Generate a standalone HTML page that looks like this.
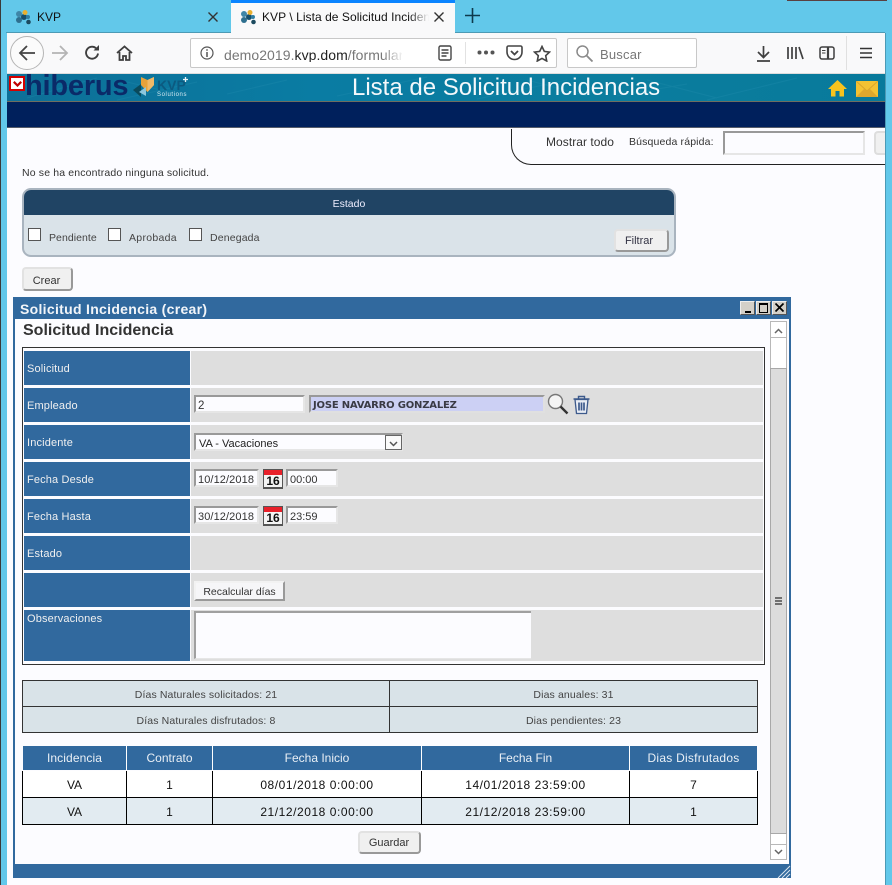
<!DOCTYPE html>
<html lang="es"><head><meta charset="utf-8"><title>KVP</title>
<style>
html,body{margin:0;padding:0;width:892px;height:885px;overflow:hidden;background:#62c8ea}
body{position:relative;font-family:"Liberation Sans",sans-serif;color:#333}
.a,.t{position:absolute;box-sizing:border-box}
.t{white-space:nowrap;line-height:1}
.lab{position:absolute;left:24px;width:166px;background:#31699e;color:#f0f0f0;font-size:11px;padding-left:3px;box-sizing:border-box;letter-spacing:.15px}
.val{position:absolute;left:191px;width:572px;background:#dedede}
.inp{position:absolute;box-sizing:border-box;background:#fcfcff;border:2px solid;border-color:#999 #e6e6e6 #e6e6e6 #999;font-size:11px;color:#333;white-space:nowrap;overflow:hidden;line-height:18px;padding-left:2px}
.btn{position:absolute;box-sizing:border-box;background:#f0f0f0;border:2px solid;border-color:#e2e2e2 #999 #999 #e2e2e2;border-radius:4px;font-size:11px;color:#333;text-align:center}
.cb{position:absolute;width:13px;height:13px;box-sizing:border-box;border:1px solid #555;background:#fff}
.c{position:absolute;text-align:center;white-space:nowrap;box-sizing:border-box}
svg{position:absolute;display:block}
.wb{position:absolute;top:301px;width:15px;height:14px;background:#d4d0c8;border:1px solid;border-color:#eee #555 #555 #eee;box-sizing:border-box}
</style></head><body>
<!-- window frame -->
<div class="a" style="left:0;top:0;width:1px;height:885px;background:#3a3a3a"></div>
<div class="a" style="left:787px;top:0;width:100px;height:1px;background:#5a4040"></div>

<!-- tabs -->
<svg style="left:15px;top:9px" width="17" height="16" viewBox="0 0 17 16"><circle cx="4" cy="5" r="3" fill="#3f86a8"/><circle cx="4" cy="11" r="3" fill="#2e6f8f"/><circle cx="9" cy="8" r="3" fill="#16506e"/><circle cx="10" cy="3.500" r="2.500" fill="#e8b030"/><circle cx="13" cy="8" r="2" fill="#2d7da3"/><circle cx="13.500" cy="13" r="2.300" fill="#1c4a5f"/></svg>
<div class="t" style="left:37px;top:11px;font-size:12px;color:#111">KVP</div>
<svg style="left:207px;top:11px" width="12" height="12"><path d="M1.500 1.500l9 9M10.500 1.500l-9 9" stroke="#333" stroke-width="1.400"/></svg>
<div class="a" style="left:6px;top:32px;width:225px;height:1px;background:#4c9ab5"></div>
<div class="a" style="left:455px;top:32px;width:430px;height:1px;background:#4c9ab5"></div>
<div class="a" style="left:231px;top:0;width:224px;height:33px;background:#f9f9fa;border-top:3px solid #0a84ff"></div>
<svg style="left:240px;top:9px" width="17" height="16" viewBox="0 0 17 16"><circle cx="4" cy="5" r="3" fill="#3f86a8"/><circle cx="4" cy="11" r="3" fill="#2e6f8f"/><circle cx="9" cy="8" r="3" fill="#16506e"/><circle cx="10" cy="3.500" r="2.500" fill="#e8b030"/><circle cx="13" cy="8" r="2" fill="#2d7da3"/><circle cx="13.500" cy="13" r="2.300" fill="#1c4a5f"/></svg>
<div class="t" style="left:262px;top:11px;font-size:12px;color:#111;width:167px;overflow:hidden;letter-spacing:.05px">KVP \ Lista de Solicitud Incidenc</div>
<div class="a" style="left:409px;top:8px;width:20px;height:18px;background:linear-gradient(90deg,rgba(249,249,250,0),#f9f9fa)"></div>
<svg style="left:433px;top:11px" width="12" height="12"><path d="M1.500 1.500l9 9M10.500 1.500l-9 9" stroke="#333" stroke-width="1.400"/></svg>
<svg style="left:465px;top:8px" width="15" height="15"><path d="M7.500 0v15M0 7.500h15" stroke="#0e3a4c" stroke-width="1.600"/></svg>

<!-- nav bar -->
<div class="a" style="left:7px;top:33px;width:878px;height:41px;background:#f9f9fa;border-bottom:1px solid #ddd"></div>
<div class="a" style="left:10px;top:36px;width:34px;height:34px;border:1px solid #b5b5b5;border-radius:50%;background:#fbfbfb"></div>
<svg style="left:18px;top:44px" width="18" height="18" fill="none" stroke="#444" stroke-width="1.800"><path d="M2 9h15M9 2L2 9l7 7"/></svg>
<svg style="left:51px;top:44px" width="18" height="18" fill="none" stroke="#b4b4b4" stroke-width="1.800"><path d="M1 9h15M9 2l7 7-7 7"/></svg>
<svg style="left:84px;top:44px" width="17" height="17" fill="none" stroke="#3f3f3f" stroke-width="1.900"><path d="M14 9.500A6 6 0 1 1 12 4.200"/><path d="M15 1v5.500H9.500" fill="#3f3f3f" stroke="none"/></svg>
<svg style="left:116px;top:45px" width="17" height="16" fill="none" stroke="#3f3f3f" stroke-width="1.800"><path d="M1 8l7.500-6.500L16 8M3.500 7v8h3.500v-4h3v4h3.500V7"/></svg>
<div class="a" style="left:190px;top:38px;width:367px;height:30px;background:#fff;border:1px solid #c8c8c8;border-radius:2px"></div>
<svg style="left:200px;top:46px" width="14" height="14" fill="none" stroke="#555" stroke-width="1.200"><circle cx="7" cy="7" r="6"/><path d="M7 6v5M7 3.200v1.500" stroke-width="1.500"/></svg>
<div class="t" style="left:224px;top:48px;font-size:14px;color:#777;width:178px;overflow:hidden;letter-spacing:.05px">demo2019.<span style="color:#222">kvp.dom</span>/formular</div>
<div class="a" style="left:382px;top:42px;width:22px;height:22px;background:linear-gradient(90deg,rgba(255,255,255,0),#fff)"></div>
<svg style="left:438px;top:45px" width="14" height="16" fill="none" stroke="#444" stroke-width="1.400"><rect x="1" y="1" width="12" height="14" rx="1.500"/><path d="M3.500 5h7M3.500 8h7M3.500 11h5"/></svg>
<div class="a" style="left:465px;top:42px;width:1px;height:22px;background:#e2e2e2"></div>
<svg style="left:477px;top:50px" width="18" height="5" fill="#555"><circle cx="2.500" cy="2.500" r="2"/><circle cx="9" cy="2.500" r="2"/><circle cx="15.500" cy="2.500" r="2"/></svg>
<svg style="left:506px;top:45px" width="17" height="16" fill="none" stroke="#444" stroke-width="1.600"><path d="M2.500 1h12A1.500 1.500 0 0 1 16 2.500V7A7.500 7.500 0 0 1 1 7V2.500A1.500 1.500 0 0 1 2.500 1z"/><path d="M5 6l3.500 3.500L12 6" stroke-width="1.800"/></svg>
<svg style="left:533px;top:45px" width="18" height="17" fill="none" stroke="#444" stroke-width="1.600"><path d="M9 1.500l2.300 4.900 5.200.700-3.800 3.600 1 5.300L9 13.400l-4.700 2.600 1-5.300L1.500 7.100l5.200-.7z"/></svg>
<div class="a" style="left:567px;top:38px;width:130px;height:30px;background:#fff;border:1px solid #c8c8c8;border-radius:2px"></div>
<svg style="left:576px;top:45px" width="17" height="17" fill="none" stroke="#8a8a8a" stroke-width="1.500"><circle cx="6.500" cy="6.500" r="5.500"/><path d="M10.500 10.500l6 6" stroke-width="1.800"/></svg>
<div class="t" style="left:600px;top:48px;font-size:13px;color:#777;letter-spacing:.2px">Buscar</div>
<svg style="left:756px;top:45px" width="15" height="17" fill="none" stroke="#3f3f3f" stroke-width="1.700"><path d="M7.500 1v11M2 7l5.500 5.500L13 7M1 16h13"/></svg>
<svg style="left:787px;top:46px" width="17" height="14" fill="none" stroke="#3f3f3f" stroke-width="1.700"><path d="M1 1v12M5 1v12M9 1v12M12 1l4 12"/></svg>
<svg style="left:819px;top:46px" width="16" height="14" fill="none" stroke="#3f3f3f" stroke-width="1.500"><rect x="1" y="1" width="14" height="12" rx="2"/><path d="M9 1v12" stroke-width="2.200"/><path d="M3 4.500h3.500M3 7h3.500" stroke-width="1"/></svg>
<div class="a" style="left:846px;top:36px;width:1px;height:34px;background:#e0e0e0"></div>
<svg style="left:860px;top:47px" width="12" height="12" stroke="#333" stroke-width="1.600"><path d="M0 1.500h12M0 6h12M0 10.500h12"/></svg>

<!-- page -->
<div class="a" style="left:7px;top:74px;width:878px;height:811px;background:#fcfcff"></div>
<div class="a" style="left:7px;top:74px;width:878px;height:28px;background:linear-gradient(90deg,#0d6f97 0%,#0a7ca3 35%,#0b7d9e 70%,#087a9b 100%);border-bottom:1px solid #6e6e60"></div>
<svg style="left:7px;top:74px" width="878" height="28" fill="none" stroke="#2a93b4" stroke-width="1" opacity=".25"><path d="M20 24L90 4M110 26L190 8M330 22L420 3M470 25L560 6M610 22L680 10M700 26L790 4M220 20l60 -14M120 8l50 12M520 6l60 16M640 6l70 18"/></svg>
<div class="a" style="left:7px;top:102px;width:878px;height:26px;background:#00205c;border-bottom:1px solid #555c6a"></div>
<div class="t" style="left:25px;top:72px;font-size:29px;font-weight:bold;color:#0a2a68;letter-spacing:-.2px">hiberus</div>
<div class="a" style="left:9px;top:76px;width:16px;height:15px;background:#fff;border:2px solid #d50000"></div>
<svg style="left:13px;top:81px" width="9" height="6" fill="none" stroke="#c00000" stroke-width="2.200"><path d="M.8 .8L4.500 4.500 8.200 .8"/></svg>
<svg style="left:132px;top:75px" width="60" height="24" viewBox="0 0 60 24"><path d="M1 15l8-6v13z" fill="#0a4a5c"/><path d="M9 2l6.500 3 6.500-3v8l-6.500 7L9 10z" fill="#e8a23a"/><path d="M15.500 5l6.500-3v8l-6.500 7z" fill="#f0b968"/><path d="M7 17l7-5v9z" fill="#8cc7dd"/><text x="25" y="15" font-family="Liberation Sans,sans-serif" font-size="14" font-weight="bold" fill="#0c5a80">KVP</text><path d="M51 4.500h5M53.500 2v5" stroke="#e8f2f6" stroke-width="1.300"/><text x="25" y="21" font-family="Liberation Sans,sans-serif" font-size="6" letter-spacing=".6" fill="#d6eaf2">Solutions</text></svg>
<div class="t" style="left:352px;top:76px;font-size:24px;color:#f4f8fb;letter-spacing:0">Lista de Solicitud Incidencias</div>
<svg style="left:828px;top:79px" width="19" height="18" fill="#f7c31e"><path d="M9.500 1L0 10h3v7.500h4.500V12h4v5.500H16V10h3z"/></svg>
<svg style="left:856px;top:81px" width="22" height="16"><rect width="22" height="16" fill="#f2c233"/><path d="M0 16l8-8 3 2.500L14 8l8 8z" fill="#dda72d"/><path d="M0 0l11 10L22 0" fill="none" stroke="#d9a52c"/></svg>

<!-- top right panel -->
<div class="a" style="left:511px;top:129px;width:374px;height:36px;border-left:1px solid #222;border-bottom:1px solid #222;border-bottom-left-radius:20px"></div>
<div class="t" style="left:546px;top:136px;font-size:12px;color:#333;letter-spacing:.05px">Mostrar todo</div>
<div class="t" style="left:629px;top:137px;font-size:10.500px;color:#333;letter-spacing:.15px">Búsqueda rápida:</div>
<div class="inp" style="left:723px;top:131px;width:142px;height:24px"></div>
<div class="a" style="left:874px;top:131px;width:11px;height:24px;background:#f0f0f0;border:2px solid #ddd;border-right:0;border-radius:4px 0 0 4px"></div>

<div class="t" style="left:22px;top:168px;font-size:10.500px;color:#333;letter-spacing:.15px">No se ha encontrado ninguna solicitud.</div>

<!-- estado filter -->
<div class="a" style="left:22px;top:188px;width:654px;height:69px;background:#dae3e9;border:2px solid #a9b4bf;border-radius:9px;overflow:hidden">
<div class="a" style="left:0;top:0;width:650px;height:25px;background:#204464"></div></div>
<div class="c" style="left:22px;top:198px;width:654px;font-size:10.500px;color:#eef;line-height:12px">Estado</div>
<div class="cb" style="left:28px;top:228px"></div>
<div class="t" style="left:49px;top:233px;font-size:10.500px;color:#444;letter-spacing:.05px">Pendiente</div>
<div class="cb" style="left:108px;top:228px"></div>
<div class="t" style="left:129px;top:233px;font-size:10.500px;color:#444;letter-spacing:.3px">Aprobada</div>
<div class="cb" style="left:189px;top:228px"></div>
<div class="t" style="left:210px;top:233px;font-size:10.500px;color:#444;letter-spacing:.15px">Denegada</div>
<div class="btn" style="left:614px;top:229px;width:55px;height:23px;line-height:20px;color:#334;padding-right:5px">Filtrar</div>
<div class="btn" style="left:22px;top:267px;width:51px;height:24px;line-height:24px;padding-right:2px">Crear</div>

<!-- dialog -->
<div class="a" style="left:13px;top:297px;width:778px;height:581px;background:#31699e"></div>
<div class="a" style="left:15px;top:319px;width:774px;height:545px;background:#fcfcff"></div>
<div class="t" style="left:20px;top:302px;font-size:14px;font-weight:bold;color:#f2f5f9;letter-spacing:.3px">Solicitud Incidencia (crear)</div>
<div class="wb" style="left:740px"></div>
<div class="a" style="left:745px;top:311px;width:6px;height:2px;background:#000"></div>
<div class="wb" style="left:756px"></div>
<div class="a" style="left:759px;top:303px;width:9px;height:10px;border:1px solid #000;border-top-width:2px;box-sizing:border-box"></div>
<div class="wb" style="left:772px"></div>
<svg style="left:775px;top:303px" width="9" height="9" stroke="#000" stroke-width="1.700"><path d="M.5 .5l8 8M8.500 .5l-8 8"/></svg>
<svg style="left:776px;top:864px" width="15" height="14" stroke="#dce6ef" stroke-width="1" fill="none"><path d="M2 14L14 2M6 14L14 6M10 14l4-4"/></svg>
<div class="t" style="left:23px;top:323px;font-size:16px;font-weight:bold;color:#333">Solicitud Incidencia</div>

<!-- form -->
<div class="a" style="left:22px;top:347px;width:743px;height:318px;border:1px solid #333"></div>
<div class="lab" style="top:351px;height:34px;line-height:36px">Solicitud</div><div class="val" style="top:351px;height:34px"></div>
<div class="lab" style="top:388px;height:34px;line-height:36px">Empleado</div><div class="val" style="top:388px;height:34px"></div>
<div class="lab" style="top:425px;height:34px;line-height:36px">Incidente</div><div class="val" style="top:425px;height:34px"></div>
<div class="lab" style="top:462px;height:34px;line-height:36px">Fecha Desde</div><div class="val" style="top:462px;height:34px"></div>
<div class="lab" style="top:499px;height:34px;line-height:36px">Fecha Hasta</div><div class="val" style="top:499px;height:34px"></div>
<div class="lab" style="top:536px;height:34px;line-height:36px">Estado</div><div class="val" style="top:536px;height:34px"></div>
<div class="lab" style="top:573px;height:34px"></div><div class="val" style="top:573px;height:34px"></div>
<div class="lab" style="top:610px;height:51px;line-height:19px">Observaciones</div><div class="val" style="top:610px;height:51px"></div>

<div class="inp" style="left:194px;top:395px;width:111px;height:18px;font-size:11.500px;padding-left:2px">2</div>
<div class="inp" style="left:309px;top:395px;width:236px;height:18px;background:#ccd0f4;border-color:#999 #e0e0e0 #e0e0e0 #999;font-family:'DejaVu Sans',sans-serif;font-weight:bold;font-size:10px;letter-spacing:-.2px;padding-left:2px;line-height:17px;color:#3a3a44">JOSE NAVARRO GONZALEZ</div>
<svg style="left:547px;top:393px" width="22" height="23" fill="none"><circle cx="8.500" cy="8.500" r="7" fill="#f4f4f4" stroke="#777" stroke-width="1.400"/><path d="M13.500 13.500l7 7" stroke="#333" stroke-width="2.400"/></svg>
<svg style="left:572px;top:395px" width="19" height="20" fill="none" stroke="#3d5a8c"><path d="M1.500 4h16M6.500 4V1.500h6V4" stroke-width="1.400"/><path d="M3 4.500l1.500 14h10L16 4.500z" stroke-width="1.300" fill="#e8ecf4"/><path d="M7 7.500v8M9.500 7.500v8M12 7.500v8" stroke-width="1.700"/></svg>

<div class="inp" style="left:194px;top:433px;width:209px;height:18px;padding-left:3px;font-size:11px;color:#222">VA - Vacaciones</div>
<div class="a" style="left:385px;top:435px;width:17px;height:15px;background:#fafafa;border:1px solid #666"></div>
<svg style="left:389px;top:441px" width="9" height="6" fill="none" stroke="#555" stroke-width="1.500"><path d="M1 1l3.500 3.500L8 1"/></svg>

<div class="inp" style="left:194px;top:469px;width:65px;height:18px;padding-left:2px;letter-spacing:.1px">10/12/2018</div>
<div class="inp" style="left:286px;top:469px;width:52px;height:18px;padding-left:2px">00:00</div>
<div class="inp" style="left:194px;top:506px;width:65px;height:18px;padding-left:2px;letter-spacing:.1px">30/12/2018</div>
<div class="inp" style="left:286px;top:506px;width:52px;height:18px;padding-left:2px">23:59</div>

<div class="a" style="left:263px;top:469px;width:20px;height:20px;background:#f4f4f4;border:1px solid #555;border-bottom-width:2px"></div>
<div class="a" style="left:264px;top:470px;width:18px;height:5px;background:#e8202a"></div>
<div class="c" style="left:263px;top:475px;width:20px;font-size:12px;font-weight:bold;color:#111;line-height:13px">16</div>
<div class="a" style="left:263px;top:506px;width:20px;height:20px;background:#f4f4f4;border:1px solid #555;border-bottom-width:2px"></div>
<div class="a" style="left:264px;top:507px;width:18px;height:5px;background:#e8202a"></div>
<div class="c" style="left:263px;top:512px;width:20px;font-size:12px;font-weight:bold;color:#111;line-height:13px">16</div>

<div class="a" style="left:194px;top:581px;width:91px;height:20px;background:#f6f6f8;border:2px solid;border-color:#f2f2f2 #999 #999 #f2f2f2;font-size:10.500px;color:#333;text-align:center;line-height:18px">Recalcular días</div>
<div class="inp" style="left:194px;top:611px;width:337px;height:48px;border-width:2px 0 1px 2px;border-color:#a0a0a0 #e6e6e6 #e6e6e6 #a0a0a0"></div>

<!-- scrollbar -->
<div class="a" style="left:770px;top:321px;width:17px;height:539px;background:#fff;border:1px solid #b8b8b8"></div>
<div class="a" style="left:770px;top:337px;width:17px;height:1px;background:#b8b8b8"></div>
<svg style="left:774px;top:328px" width="9" height="6" fill="none" stroke="#666" stroke-width="1.500"><path d="M1 5l3.500-3.500L8 5"/></svg>
<div class="a" style="left:770px;top:368px;width:17px;height:466px;background:#dcdcdc;border:1px solid #a8a8a8"></div>
<div class="a" style="left:770px;top:844px;width:17px;height:1px;background:#b8b8b8"></div>
<svg style="left:774px;top:849px" width="9" height="6" fill="none" stroke="#666" stroke-width="1.500"><path d="M1 1l3.500 3.500L8 1"/></svg>
<div class="a" style="left:775px;top:597px;width:7px;height:2px;background:#707070"></div>
<div class="a" style="left:775px;top:600px;width:7px;height:2px;background:#707070"></div>
<div class="a" style="left:775px;top:603px;width:7px;height:2px;background:#707070"></div>

<!-- stats -->
<div class="a" style="left:22px;top:680px;width:736px;height:53px;background:#d9e3e8;border:1px solid #333"></div>
<div class="a" style="left:23px;top:706px;width:734px;height:1px;background:#333"></div>
<div class="a" style="left:389px;top:681px;width:1px;height:51px;background:#333"></div>
<div class="c" style="left:23px;top:689px;width:366px;font-size:10.500px;line-height:12px;color:#444;letter-spacing:.12px">Días Naturales solicitados: 21</div>
<div class="c" style="left:23px;top:715px;width:366px;font-size:10.500px;line-height:12px;color:#444;letter-spacing:.12px">Días Naturales disfrutados: 8</div>
<div class="c" style="left:390px;top:689px;width:367px;font-size:10.500px;line-height:12px;color:#444;letter-spacing:.12px">Dias anuales: 31</div>
<div class="c" style="left:390px;top:715px;width:367px;font-size:10.500px;line-height:12px;color:#444;letter-spacing:.12px">Dias pendientes: 23</div>

<!-- history table -->
<div class="a" style="left:23px;top:746px;width:734px;height:24px;background:#31699e"></div>
<div class="a" style="left:126px;top:746px;width:1px;height:24px;background:#fff"></div>
<div class="a" style="left:212px;top:746px;width:1px;height:24px;background:#fff"></div>
<div class="a" style="left:421px;top:746px;width:1px;height:24px;background:#fff"></div>
<div class="a" style="left:629px;top:746px;width:1px;height:24px;background:#fff"></div>
<div class="c" style="left:23px;top:746px;width:103px;line-height:24px;font-size:12px;color:#eaf0f6;letter-spacing:.1px">Incidencia</div>
<div class="c" style="left:127px;top:746px;width:85px;line-height:24px;font-size:12px;color:#eaf0f6">Contrato</div>
<div class="c" style="left:213px;top:746px;width:208px;line-height:24px;font-size:12px;color:#eaf0f6">Fecha Inicio</div>
<div class="c" style="left:422px;top:746px;width:207px;line-height:24px;font-size:12px;color:#eaf0f6">Fecha Fin</div>
<div class="c" style="left:630px;top:746px;width:127px;line-height:24px;font-size:12px;color:#eaf0f6;letter-spacing:.25px">Dias Disfrutados</div>
<div class="a" style="left:22px;top:771px;width:736px;height:54px;background:#fff;border:1px solid #000;border-top:0"></div>
<div class="a" style="left:23px;top:798px;width:734px;height:26px;background:#e2ebf1"></div>
<div class="a" style="left:23px;top:797px;width:734px;height:1px;background:#000"></div>
<div class="a" style="left:126px;top:771px;width:1px;height:53px;background:#000"></div>
<div class="a" style="left:212px;top:771px;width:1px;height:53px;background:#000"></div>
<div class="a" style="left:421px;top:771px;width:1px;height:53px;background:#000"></div>
<div class="a" style="left:629px;top:771px;width:1px;height:53px;background:#000"></div>
<div class="c" style="left:23px;top:772px;width:103px;line-height:26px;font-size:12px;color:#111">VA</div>
<div class="c" style="left:127px;top:772px;width:85px;line-height:26px;font-size:12px;color:#111">1</div>
<div class="c" style="left:213px;top:772px;width:208px;line-height:26px;font-size:12px;color:#111;letter-spacing:.55px">08/01/2018 0:00:00</div>
<div class="c" style="left:422px;top:772px;width:207px;line-height:26px;font-size:12px;color:#111;letter-spacing:.55px">14/01/2018 23:59:00</div>
<div class="c" style="left:630px;top:772px;width:127px;line-height:26px;font-size:12px;color:#111">7</div>
<div class="c" style="left:23px;top:799px;width:103px;line-height:26px;font-size:12px;color:#111">VA</div>
<div class="c" style="left:127px;top:799px;width:85px;line-height:26px;font-size:12px;color:#111">1</div>
<div class="c" style="left:213px;top:799px;width:208px;line-height:26px;font-size:12px;color:#111;letter-spacing:.55px">21/12/2018 0:00:00</div>
<div class="c" style="left:422px;top:799px;width:207px;line-height:26px;font-size:12px;color:#111;letter-spacing:.55px">21/12/2018 23:59:00</div>
<div class="c" style="left:630px;top:799px;width:127px;line-height:26px;font-size:12px;color:#111">1</div>
<div class="btn" style="left:358px;top:831px;width:63px;height:23px;line-height:20px;padding-right:1px">Guardar</div>

<!-- right edge -->
<div class="a" style="left:885px;top:33px;width:7px;height:852px;background:#62c8ea;border-left:1px solid #4c9ab5"></div>
</body></html>
